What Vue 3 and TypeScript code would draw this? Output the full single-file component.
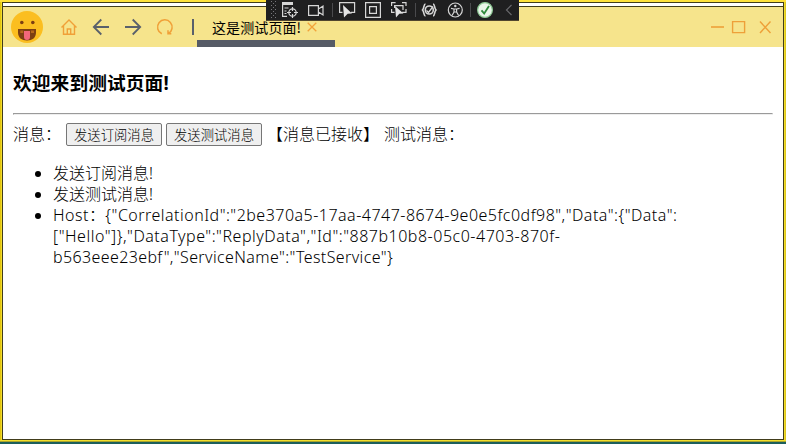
<script setup lang="ts">
interface LogItem {
  id: number
  lines: { text: string; cls: string }[]
}

const title: string = '这是测试页面!'
const logs: LogItem[] = [
  { id: 1, lines: [{ text: '发送订阅消息!', cls: 'zh' }] },
  { id: 2, lines: [{ text: '发送测试消息!', cls: 'zh' }] },
  {
    id: 3,
    lines: [
      { text: 'Host：{"CorrelationId":"2be370a5-17aa-4747-8674-9e0e5fc0df98","Data":{"Data":', cls: 'l1' },
      { text: '["Hello"]},"DataType":"ReplyData","Id":"887b10b8-05c0-4703-870f-', cls: 'l2' },
      { text: 'b563eee23ebf","ServiceName":"TestService"}', cls: 'l3' },
    ],
  },
]
</script>

<template>
  <div class="desktop">
    <div class="window">
      <div class="strip"></div>
      <header class="bar">
        <svg class="logo" viewBox="0 0 32 32">
          <circle cx="16" cy="16" r="16" fill="#fbbe20" />
          <circle cx="10.8" cy="11.5" r="1.8" fill="#7c3f12" />
          <circle cx="21.8" cy="11.5" r="1.8" fill="#7c3f12" />
          <path d="M7 18h18v3.5c0 5-3.5 8-9 8s-9-3-9-8z" fill="#7c3f12" />
          <path d="M9.3 19.5h3v2.5h-3zM20 19.5h3v2.5h-3z" fill="#b5671b" />
          <path d="M13 20h6v6a3 3 0 0 1-6 0z" fill="#f2677a" />
        </svg>
        <nav class="nav">
          <svg class="ico" viewBox="0 0 16 16" fill="none" stroke="#f0a038" stroke-width="1.4">
            <path d="M.5 8.5 8 1l7.5 7.5M2.5 7v8.300h11V7M6.300 15V10h3.400v5" />
          </svg>
          <svg class="ico" viewBox="0 0 16 16" fill="none" stroke="#59606b" stroke-width="1.8">
            <path d="M16 8H1M8.300.5.800 8l7.500 7.500" />
          </svg>
          <svg class="ico" viewBox="0 0 16 16" fill="none" stroke="#59606b" stroke-width="1.8">
            <path d="M0 8h15M7.700.5 15.200 8l-7.500 7.500" />
          </svg>
          <svg class="ico" viewBox="0 0 16 16" fill="none" stroke="#f0a038" stroke-width="1.5">
            <path d="M4.800 14.800A7.300 7.300 0 1 1 11.300 14.600M11 11.300v3.500h3.300" />
          </svg>
        </nav>
        <i class="sep"></i>
        <div class="tab">
          <span class="tab-title">{{ title }}</span>
          <svg class="tab-x" viewBox="0 0 10 10" fill="none" stroke="#f2a23a" stroke-width="1.3">
            <path d="m.7.7 8.600 8.600M9.300.7.700 9.300" />
          </svg>
        </div>
        <svg class="controls" viewBox="0 0 61 14" fill="none" stroke="#eea039" stroke-width="1.4">
          <path d="M0 7h13" stroke-width="1.6" />
          <path d="M21.600 1.600h12v11h-12zM49 1.500l10.500 11.500M59.500 1.500 49 13" />
        </svg>
      </header>

      <main class="page">
        <h3>欢迎来到测试页面!</h3>
        <hr />
        <div class="row">
          <span class="label">消息：</span>
          <button type="button">发送订阅消息</button>
          <button type="button">发送测试消息</button>
          <span class="state">【消息已接收】</span>
          <span>测试消息：</span>
        </div>
        <ul>
          <li v-for="item in logs" :key="item.id">
            <span v-for="line in item.lines" :key="line.text" class="line" :class="line.cls">{{ line.text }}</span>
          </li>
        </ul>
      </main>
    </div>

    <svg class="debugbar" viewBox="0 0 253 21" fill="none" stroke="#d6d6d6" stroke-width="1.2">
      <rect width="253" height="21" fill="#1f1f20" stroke="none" />
      <path d="M0 20.500h253" stroke="#51462f" stroke-width="1" />
      <path d="M5.500 1v18M9.500 1v18" stroke="#77777b" stroke-width="1" stroke-dasharray="1 3" />
      <path d="M7.500 3v16" stroke="#77777b" stroke-width="1" stroke-dasharray="1 3" />
      <path d="M16 3.500h11" stroke-width="3" />
      <path d="M16.600 2v14.400H21M18.500 8h4M18.500 11h2M18.500 13.500h2" />
      <circle cx="26.500" cy="12.500" r="3.700" />
      <path d="M26.500 7v4M26.500 14v4M21 12.500h4M28 12.500h4" />
      <path d="M42.600 5.600h9.800v9.800h-9.800zM52.400 9l4.600-3v9l-4.600-3" />
      <path d="M66.500 3v14M149.500 3v14M204.500 3v14" stroke="#4a4a4d" stroke-width="1" />
      <path d="M76.500 12.400H73.600V2.600h15v9.800H85" />
      <path d="m77 5 9 8.500-4.300.3-3.700 3.700z" fill="#e4e4e4" stroke="none" />
      <path d="M99.600 2.600h14.800v14.800H99.600zM103.600 6.600h6.800v6.800h-6.800z" />
      <path d="M125.600 6V2.600h4M136 2.600h4V6M140 9v3.400h-4M125.600 9v3.400h3M128.600 8V5.600h8.400V10" />
      <path d="m129 6 8.500 7.500-4.200.3-3.300 3.700z" fill="#e4e4e4" stroke="none" />
      <path d="M159.500 4c-2 0-1 4-3 6 2 2 1 6 3 6M167 4c2 0 1 4 3 6-2 2-1 6-3 6" stroke-width="1.6" />
      <circle cx="163.300" cy="10" r="4" stroke-width="1.6" />
      <path d="m160.500 10.500 2 2 4.500-6" stroke-width="1.3" />
      <circle cx="189.300" cy="10" r="7" />
      <circle cx="189.300" cy="6" r="1.200" fill="#d6d6d6" stroke="none" />
      <path d="m185 8.300 3 .7h2.600l3-.7M188 9v3l-2 3.500M190.600 9v3l2 3.500M188 12h2.600" />
      <circle cx="219" cy="10" r="7.400" fill="#eaf5ea" stroke="#8dc894" stroke-width="1.2" />
      <path d="m215.500 10.300 2.700 3.200 4.800-7.500" stroke="#2f8a3c" stroke-width="1.8" />
      <path d="m245.500 5-5 5 5 5" stroke="#6a6a6d" />
    </svg>
  </div>
</template>

<style>
body {
  margin: 0;
  overflow: hidden;
}
</style>

<style scoped>
.desktop {
  position: relative;
  box-sizing: border-box;
  width: 786px;
  height: 444px;
  padding: 2px 2px 4px;
  background: linear-gradient(#ffe23c 0 2px, transparent 2px 440px, #f2df2e 440px 441px, #a9a52c 441px 442px, #1c5f5c 442px),
    linear-gradient(90deg, #e3c40c 0 1px, #f2dc2c 1px 785px, #dcc61d 785px);
  font-family: 'Noto Sans', 'Noto Sans CJK SC', sans-serif;
  color: #000;
}
.debugbar {
  position: absolute;
  top: 0;
  left: 266px;
  width: 253px;
  height: 21px;
}
.window {
  box-sizing: border-box;
  height: 438px;
  border: 1px solid #413c1b;
  background: #fff;
}
.strip {
  height: 3px;
  border-bottom: 1px solid #413c1b;
}
.bar {
  display: flex;
  align-items: center;
  height: 40px;
  background: #f6e48c;
}
.logo {
  flex: none;
  width: 32px;
  height: 32px;
  margin-left: 8px;
}
.nav {
  display: flex;
  gap: 16px;
  margin-left: 18px;
}
.ico {
  width: 16px;
  height: 16px;
  overflow: visible;
}
.sep {
  width: 2px;
  height: 16px;
  margin-left: 19px;
  background: #59606b;
}
.tab {
  display: flex;
  align-items: center;
  box-sizing: border-box;
  width: 138px;
  height: 40px;
  margin-left: 3px;
  padding: 7px 0 0 15px;
  border-bottom: 7px solid #565b66;
}
.tab-title {
  width: 95px;
  font: 14px/20px 'Noto Sans CJK SC', sans-serif;
  letter-spacing: 0.1px;
  white-space: nowrap;
}
.tab-x {
  width: 10px;
  height: 10px;
}
.controls {
  width: 61px;
  height: 14px;
  margin-right: 11px;
  margin-left: auto;
}
.page {
  padding: 25px 10px 0;
}
h3 {
  margin: 0;
  font-size: 18.72px;
  line-height: 22px;
  letter-spacing: 0.1px;
}
hr {
  margin: 19px 0 8px;
}
.row {
  display: flex;
  align-items: center;
  height: 23px;
  font-size: 16px;
  font-weight: 300;
  line-height: 23px;
  white-space: nowrap;
}
.label {
  width: 53px;
}
button {
  box-sizing: border-box;
  width: 96px;
  height: 23px;
  margin-right: 4px;
  padding: 0;
  border: 1px solid #767676;
  border-radius: 2px;
  background: #efefef;
  color: #000;
  font: 300 13.333px/20px 'Noto Sans CJK SC', sans-serif;
}
.state {
  width: 117px;
  margin-left: 1px;
}
ul {
  margin: 17px 0 0;
  padding-left: 40px;
  font-size: 16px;
  font-weight: 300;
  line-height: 21px;
}
.line {
  display: block;
  white-space: nowrap;
}
.l1 {
  letter-spacing: 0.48px;
}
.l2 {
  letter-spacing: 0.51px;
}
.l3 {
  letter-spacing: 0.38px;
}
</style>
